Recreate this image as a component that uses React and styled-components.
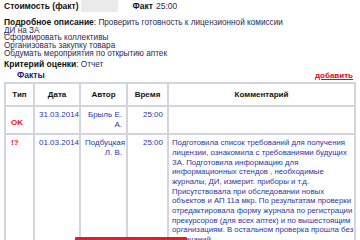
import React from "react";
import styled, { createGlobalStyle } from "styled-components";

const Global = createGlobalStyle`
  html, body { margin: 0; padding: 0; background: #fff; }
  body { font-family: "Liberation Sans", Arial, sans-serif; font-size: 8px; color: #2b2b55; }
`;

const Page = styled.div`
  position: relative;
  width: 360px;
  height: 240px;
  overflow: hidden;
  padding: 0 4px;
  box-sizing: border-box;
`;

const TopRow = styled.div`
  display: flex;
  align-items: center;
  height: 12px;
`;

const Label = styled.b`
  color: #111;
  font-weight: bold;
  font-size: 8.5px;
`;

const GreyBox = styled.span`
  display: inline-block;
  width: 37px;
  height: 12px;
  margin-left: 2px;
  background: #ebebeb;
`;

const FactTime = styled.span`
  margin-left: 15px;
  display: flex;
  align-items: baseline;
  gap: 3px;
  font-size: 8.5px;
`;

const Desc = styled.div`
  margin-top: 7px;
  line-height: 7.7px;
  font-size: 8.2px;
`;

const Criteria = styled.div`
  margin-top: 2px;
  line-height: 9px;
  font-size: 8.2px;
`;

const FactsBar = styled.div`
  display: flex;
  justify-content: space-between;
  align-items: flex-end;
  height: 11px;
  line-height: 9px;
`;

const FactsTitle = styled.b`
  color: #1b1b80;
  padding-left: 13px;
  font-size: 8.5px;
`;

const AddLink = styled.a`
  color: #e8001c;
  font-weight: bold;
  text-decoration: underline;
  margin-right: 3px;
  cursor: pointer;
`;

const Table = styled.table`
  margin-top: 2px;
  width: 352px;
  border-collapse: collapse;
  table-layout: fixed;
  color: #2a36a6;
`;

const Th = styled.th`
  border: 2px solid #d4d4de;
  height: 19px;
  padding: 2px 2px 0;
  font-weight: bold;
  color: #111;
  text-align: center;
  vertical-align: middle;
  line-height: 10px;
`;

const Td = styled.td`
  border: 2px solid #d4d4de;
  padding: 3px 4px 3px 4px;
  vertical-align: top;
  line-height: 10.3px;
  text-align: ${(p) => p.$align || "left"};
`;

const TypeCell = styled(Td)`
  vertical-align: ${(p) => p.$valign || "top"};
  color: #ee1111;
  font-weight: bold;
  padding-left: 5px;
  padding-bottom: 5px;
`;

const Comment = styled(Td)`
  line-height: 9.7px;
  font-size: 7.8px;
  padding-left: 3px;
  padding-right: 0;
`;

const RedEdge = styled.div`
  position: absolute;
  left: 75px;
  top: 237px;
  width: 112px;
  height: 3px;
  background: #e31b2b;
  border-radius: 1px 1px 0 0;
`;

export default function App() {
  return (
    <>
      <Global />
      <Page>
        <TopRow>
          <Label>Стоимость (факт)</Label>
          <GreyBox />
          <FactTime>
            <Label>Факт</Label>
            <span>25:00</span>
          </FactTime>
        </TopRow>
        <Desc>
          <Label>Подробное описание</Label>: Проверить готовность к лицензионной комиссии
          <br />
          ДИ на ЗА
          <br />
          Сформировать коллективы
          <br />
          Организовать закупку товара
          <br />
          Обдумать мероприятия по открытию аптек
        </Desc>
        <Criteria>
          <Label>Критерий оценки</Label>: Отчет
        </Criteria>
        <FactsBar>
          <FactsTitle>Факты</FactsTitle>
          <AddLink>добавить</AddLink>
        </FactsBar>
        <Table>
          <colgroup>
            <col style={{ width: 29 }} />
            <col style={{ width: 46 }} />
            <col style={{ width: 47 }} />
            <col style={{ width: 41 }} />
            <col />
          </colgroup>
          <thead>
            <tr>
              <Th>Тип</Th>
              <Th>Дата</Th>
              <Th>Автор</Th>
              <Th>Время</Th>
              <Th>Комментарий</Th>
            </tr>
          </thead>
          <tbody>
            <tr>
              <TypeCell $valign="bottom">OK</TypeCell>
              <Td $align="center">31.03.2014</Td>
              <Td $align="right">Брыль Е. А.</Td>
              <Td $align="right">25:00</Td>
              <Comment></Comment>
            </tr>
            <tr>
              <TypeCell>!?</TypeCell>
              <Td $align="center">01.03.2014</Td>
              <Td $align="right">Подбуцкая Л. В.</Td>
              <Td $align="right">25:00</Td>
              <Comment>
                Подготовила список требований для получения лицензии, ознакомила с требованиями будущих ЗА. Подготовила информацию для информационных стендов , необходимые журналы, ДИ, измерит. приборы и т.д. Присутствовала при обследовании новых объектов и АП 11а мкр. По результатам проверки отредактировала форму журнала по регистрации прекурсоров (для всех аптек) и по вышестоящим организациям. В остальном проверка прошла без замечаний.
              </Comment>
            </tr>
          </tbody>
        </Table>
        <RedEdge />
      </Page>
    </>
  );
}
